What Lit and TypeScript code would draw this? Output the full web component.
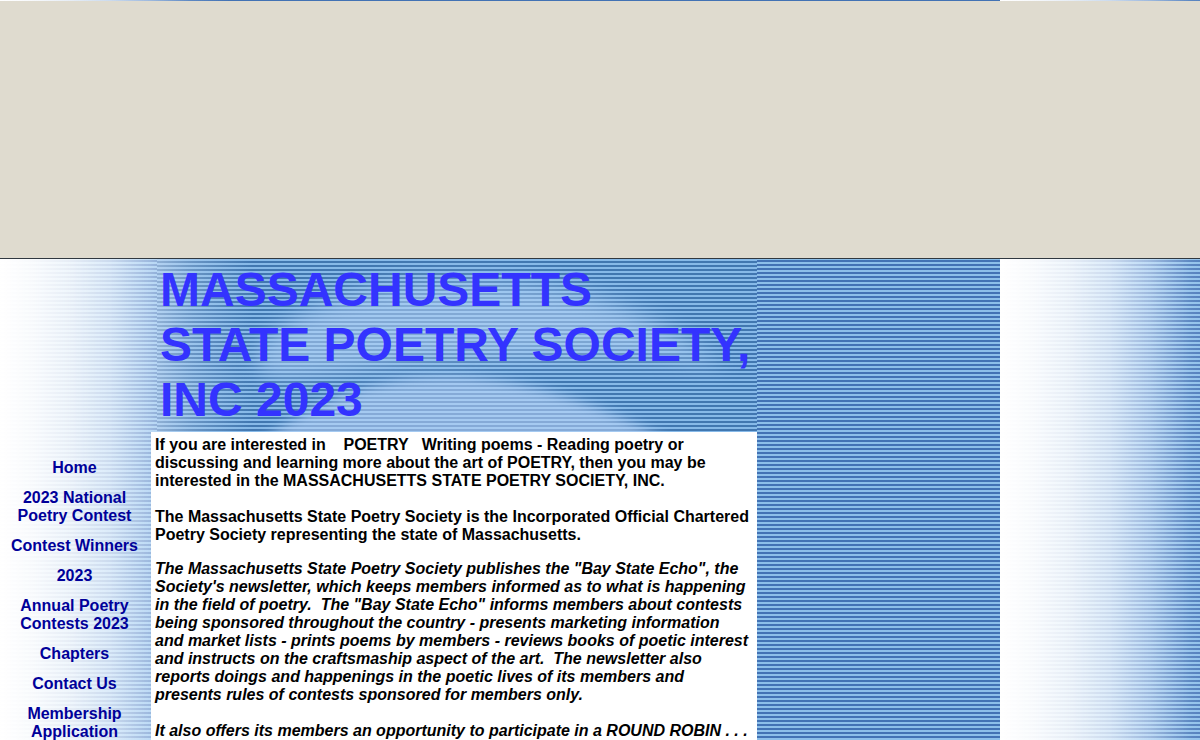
import { LitElement, html, css } from "lit";
import { customElement } from "lit/decorators.js";

const links = [
  "Home",
  "2023 National Poetry Contest",
  "Contest Winners",
  "2023",
  "Annual Poetry Contests 2023",
  "Chapters",
  "Contact Us",
  "Membership Application",
];

@customElement("app-root")
export class AppRoot extends LitElement {
  static styles = css`
    :host {
      display: flex;
      flex-direction: column;
      height: 100vh;
      overflow: hidden;
      font: bold 16px/18px "Liberation Sans", Arial, sans-serif;
      color: #000;
      background:
        linear-gradient(90deg, #fff 0, rgba(255, 255, 255, 0.96) 30px, rgba(253, 254, 255, 0.88) 70px, rgba(242, 248, 255, 0.78) 110px, rgba(228, 240, 255, 0.56) 150px, rgba(200, 222, 250, 0.2) 190px, rgba(180, 210, 245, 0) 230px) 0 0 / 1000px 100%,
        repeating-linear-gradient(180deg, #4272b4 0 2px, #8cbfe9 2px 4px);
    }
    .panel {
      box-sizing: border-box;
      flex: none;
      height: 258px;
      margin-top: 1px;
      background: #dfdbcf;
      border-bottom: 1px solid #303840;
    }
    .layout {
      flex: 1;
      display: grid;
      grid-template-columns: 151px 606px;
      grid-template-rows: auto 1fr;
    }
    .banner {
      grid-column: 2;
      margin-left: 6px;
      min-height: 173px;
      position: relative;
    }
    .art {
      position: absolute;
      inset: 0;
      width: 100%;
      height: 100%;
    }
    h1 {
      position: relative;
      margin: 0;
      padding: 3px 3px 0;
      font-size: 48px;
      line-height: 55px;
      color: #3333ff;
    }
    nav {
      grid-column: 1;
      padding: 27px 4px 0 2px;
      display: flex;
      flex-direction: column;
      gap: 12px;
      text-align: center;
    }
    a {
      color: #000099;
      text-decoration: none;
      padding: 0 6px;
    }
    main {
      background: #fff;
      padding: 4px;
    }
    p {
      margin: 0 0 18px;
      white-space: pre;
    }
    .lead {
      margin-bottom: 16px;
    }
    .news {
      font-style: italic;
    }
  `;

  render() {
    return html`
      <div class="panel"></div>
      <div class="layout">
        <header class="banner">
          <svg class="art" viewBox="0 0 600 173" preserveAspectRatio="none" aria-hidden="true">
            <defs>
              <pattern id="lines" width="4" height="4" patternUnits="userSpaceOnUse">
                <rect width="4" height="4" fill="#86b9e8" />
                <rect width="4" height="2" y="2" fill="#4177b0" />
              </pattern>
              <linearGradient id="edge">
                <stop offset="0" stop-color="#dfeafa" stop-opacity=".5" />
                <stop offset=".06" stop-color="#cfe0f6" stop-opacity=".28" />
                <stop offset=".16" stop-color="#b9d3f2" stop-opacity="0" />
              </linearGradient>
              <filter id="soft" x="-20%" y="-30%" width="140%" height="160%">
                <feGaussianBlur stdDeviation="11" />
              </filter>
              <filter id="softer" x="-20%" y="-20%" width="140%" height="140%">
                <feGaussianBlur stdDeviation="6" />
              </filter>
            </defs>
            <rect width="600" height="173" fill="url(#lines)" />
            <path filter="url(#soft)" fill="#bcd8f8" opacity=".52" d="M95 100 C125 50 200 22 310 22 S480 44 570 110 C500 92 420 100 330 100 S170 120 110 118Z" />
            <path filter="url(#softer)" fill="#c3dafb" opacity=".52" d="M90 195 C150 140 225 117 290 117 S440 140 530 192Z" />
            <rect width="600" height="173" fill="url(#edge)" />
          </svg>
          <h1>MASSACHUSETTS<br />STATE POETRY SOCIETY,<br />INC 2023</h1>
        </header>
        <nav>${links.map((t) => html`<a href="#">${t}</a>`)}</nav>
        <main>
          <p>If you are interested in \u00a0\u00a0 POETRY \u00a0 Writing poems - Reading poetry or
discussing and learning more about the art of POETRY, then you may be
interested in the MASSACHUSETTS STATE POETRY SOCIETY, INC.</p>
          <p class="lead">The Massachusetts State Poetry Society is the Incorporated Official Chartered
Poetry Society representing the state of Massachusetts.</p>
          <p class="news">The Massachusetts State Poetry Society publishes the "Bay State Echo", the
Society's newsletter, which keeps members informed as to what is happening
in the field of poetry. \u00a0The "Bay State Echo" informs members about contests
being sponsored throughout the country - presents marketing information
and market lists - prints poems by members - reviews books of poetic interest
and instructs on the craftsmaship aspect of the art. \u00a0The newsletter also
reports doings and happenings in the poetic lives of its members and
presents rules of contests sponsored for members only.</p>
          <p class="news">It also offers its members an opportunity to participate in a ROUND ROBIN . . .</p>
        </main>
      </div>
    `;
  }
}
